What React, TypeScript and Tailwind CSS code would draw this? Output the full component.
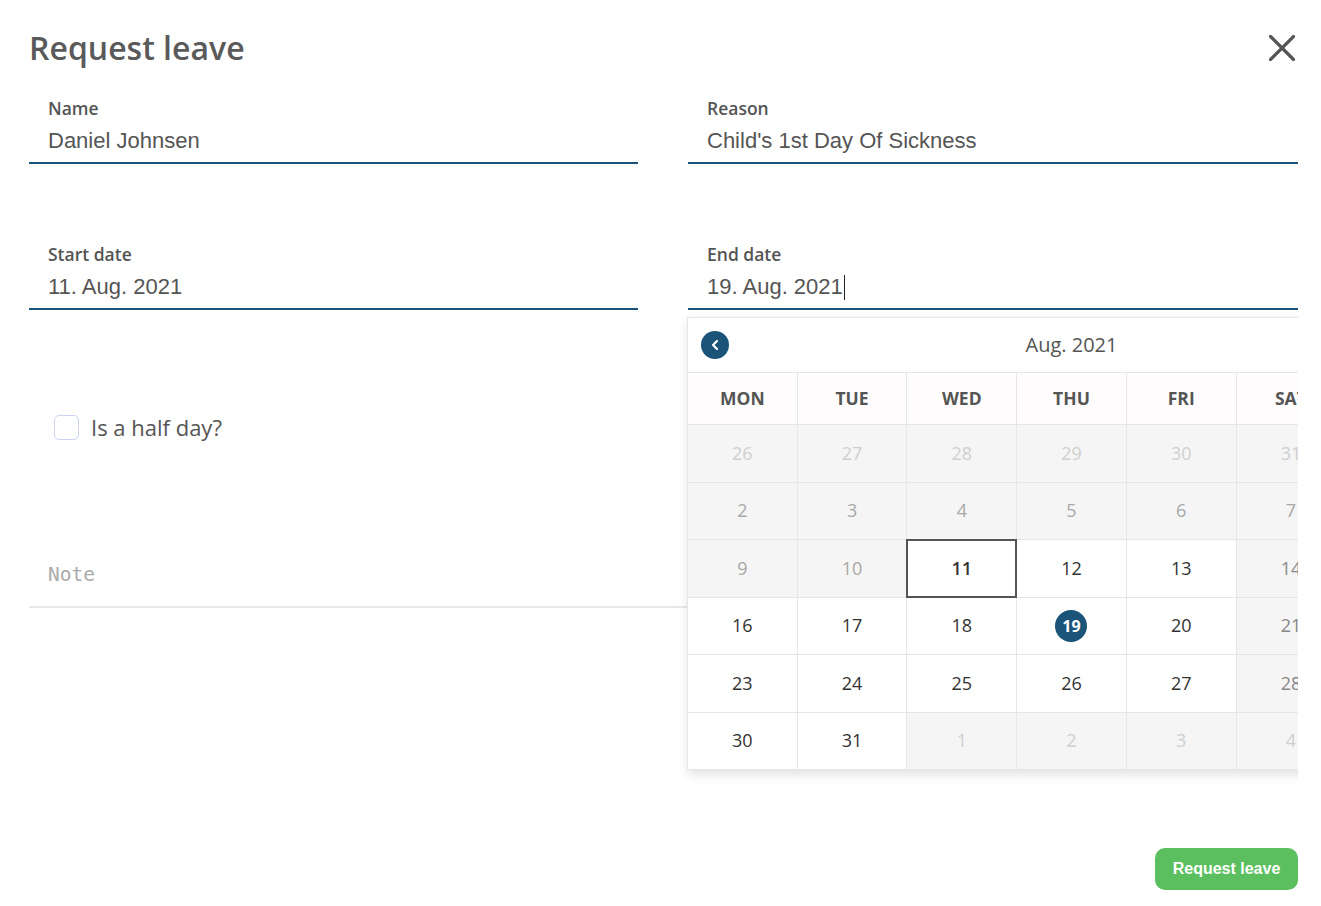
import React from "react";
import { ChevronLeft } from "lucide-react";

type Cell = { d: number; kind: "other" | "past" | "weekend" | "normal" | "start" | "end" };

const weeks: Cell[][] = [
  [26, 27, 28, 29, 30, 31].map((d) => ({ d, kind: "other" as const })).concat([{ d: 1, kind: "past" }]),
  [2, 3, 4, 5, 6, 7, 8].map((d) => ({ d, kind: "past" as const })),
  [
    { d: 9, kind: "past" },
    { d: 10, kind: "past" },
    { d: 11, kind: "start" },
    { d: 12, kind: "normal" },
    { d: 13, kind: "normal" },
    { d: 14, kind: "weekend" },
    { d: 15, kind: "weekend" },
  ],
  [
    { d: 16, kind: "normal" },
    { d: 17, kind: "normal" },
    { d: 18, kind: "normal" },
    { d: 19, kind: "end" },
    { d: 20, kind: "normal" },
    { d: 21, kind: "weekend" },
    { d: 22, kind: "weekend" },
  ],
  [
    { d: 23, kind: "normal" },
    { d: 24, kind: "normal" },
    { d: 25, kind: "normal" },
    { d: 26, kind: "normal" },
    { d: 27, kind: "normal" },
    { d: 28, kind: "weekend" },
    { d: 29, kind: "weekend" },
  ],
  [
    { d: 30, kind: "normal" },
    { d: 31, kind: "normal" },
    { d: 1, kind: "other" },
    { d: 2, kind: "other" },
    { d: 3, kind: "other" },
    { d: 4, kind: "other" },
    { d: 5, kind: "other" },
  ],
];

const dayNames = ["MON", "TUE", "WED", "THU", "FRI", "SAT", "SUN"];

function DayCell({ c }: { c: Cell }) {
  const base =
    "relative h-[57.5px] border-r border-b border-[#e6e6e6] flex items-center justify-center text-[18px]";
  if (c.kind === "other")
    return <div className={`${base} bg-[#f5f5f5] text-[#cfcfcf]`}>{c.d}</div>;
  if (c.kind === "past")
    return <div className={`${base} bg-[#f5f5f5] text-[#a8a8a8]`}>{c.d}</div>;
  if (c.kind === "weekend")
    return <div className={`${base} bg-[#f5f5f5] text-[#888]`}>{c.d}</div>;
  if (c.kind === "start")
    return (
      <div className={`${base} bg-white text-[#333] font-semibold`}>
        <span className="absolute -inset-px border-2 border-[#555]" />
        {c.d}
      </div>
    );
  if (c.kind === "end")
    return (
      <div className={`${base} bg-white`}>
        <span className="w-[32px] h-[32px] rounded-full bg-[#1b5479] text-white font-bold text-[16px] flex items-center justify-center">
          {c.d}
        </span>
      </div>
    );
  return <div className={`${base} bg-white text-[#333]`}>{c.d}</div>;
}

function Calendar() {
  return (
    <div className="absolute left-0 top-full mt-[7px] w-[768px] bg-white border-t border-[#e6e6e6] shadow-[-1px_0_0_#e6e6e6,0_4px_10px_rgba(0,0,0,0.13)] font-['Open_Sans',sans-serif] z-10">
      <div className="relative h-[55px] border-b border-r border-[#e6e6e6] flex items-center justify-center">
        <button className="absolute left-[13px] top-[13px] w-[28px] h-[28px] rounded-full bg-[#1b5479] flex items-center justify-center text-white">
          <ChevronLeft size={16} strokeWidth={3.2} />
        </button>
        <span className="text-[20px] text-[#555]">Aug. 2021</span>
      </div>
      <div className="grid grid-cols-7">
        {dayNames.map((n) => (
          <div
            key={n}
            className="h-[52px] border-r border-b border-[#e6e6e6] bg-[#fefcfd] flex items-center justify-center text-[17.5px] font-bold text-[#555]"
          >
            {n}
          </div>
        ))}
        {weeks.flat().map((c, i) => (
          <DayCell key={i} c={c} />
        ))}
      </div>
    </div>
  );
}

function Field({
  label,
  value,
  caret,
  children,
}: {
  label: string;
  value: string;
  caret?: boolean;
  children?: React.ReactNode;
}) {
  return (
    <div className="relative">
      <div className="border-b-2 border-[#1b5479] pl-[19px] pb-[9px]">
        <div className="h-[22px] leading-[22px] text-[17.5px] font-semibold text-[#555] font-['Open_Sans',sans-serif]">
          {label}
        </div>
        <div className="mt-[10px] h-[24px] leading-[24px] text-[22px] text-[#555] font-['Liberation_Sans',Arial,sans-serif] flex items-center">
          {value}
          {caret && <span className="inline-block w-px h-[25px] bg-[#222] ml-px" />}
        </div>
      </div>
      {children}
    </div>
  );
}

export default function App() {
  return (
    <div className="w-[1321px] h-[906px] bg-white pl-[29px] pr-[23px] font-['Open_Sans',sans-serif]">
      <div className="relative w-[1269px] h-[906px] overflow-hidden">
        <div className="flex items-center justify-between pt-[28px]">
          <h1 className="text-[32px] leading-[40px] font-semibold text-[#5a5a5a]">Request leave</h1>
          <button className="mr-[3px] w-[26px] h-[26px] flex items-center justify-center text-[#555]">
            <svg width="26" height="26" viewBox="0 0 26 26" fill="none">
              <path d="M1.5 1.5 L24.5 24.5 M24.5 1.5 L1.5 24.5" stroke="currentColor" strokeWidth="3.2" strokeLinecap="square" />
            </svg>
          </button>
        </div>

        <div className="grid grid-cols-[609px_610px] gap-x-[50px] gap-y-[79px] mt-[29px]">
          <Field label="Name" value="Daniel Johnsen" />
          <Field label="Reason" value="Child's 1st Day Of Sickness" />
          <Field label="Start date" value="11. Aug. 2021" />
          <Field label="End date" value="19. Aug. 2021" caret>
            <Calendar />
          </Field>
        </div>

        <label className="mt-[102px] ml-[25px] flex items-center gap-[12px] h-[30px]">
          <span className="w-[25px] h-[25px] rounded-[5px] border border-[#cdd3f2] bg-white" />
          <span className="text-[22px] text-[#555]">Is a half day?</span>
        </label>

        <div className="mt-[121px] pl-[19px] pb-[19px] border-b-2 border-[#e8e8e8]">
          <div className="h-[24px] leading-[24px] text-[19.5px] text-[#aaa] font-['DejaVu_Sans_Mono',monospace]">Note</div>
        </div>

        <div className="flex justify-end mt-[240px]">
          <button className="w-[143px] h-[42px] rounded-[10px] bg-[#5bbf60] text-white font-bold text-[16px] font-['Liberation_Sans',Arial,sans-serif]">
            Request leave
          </button>
        </div>
      </div>
    </div>
  );
}
